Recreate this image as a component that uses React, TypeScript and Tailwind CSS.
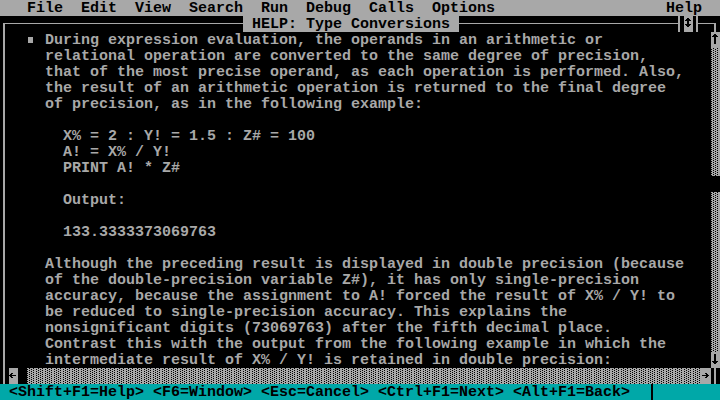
import { useId } from "react"

const GRAY = "#a8a8a8"

// VGA 8x16 glyph rows for the little arrow boxes
const UP = [0, 0, 0x18, 0x3c, 0x7e, 0x18, 0x18, 0x18, 0x18, 0x18, 0x18, 0x18, 0, 0, 0, 0]
const DOWN = [0, 0, 0x18, 0x18, 0x18, 0x18, 0x18, 0x18, 0x18, 0x7e, 0x3c, 0x18, 0, 0, 0, 0]
const LEFT = [0, 0, 0, 0, 0, 0x30, 0x60, 0xfe, 0x60, 0x30, 0, 0, 0, 0, 0, 0]
const RIGHT = [0, 0, 0, 0, 0, 0x18, 0x0c, 0xfe, 0x0c, 0x18, 0, 0, 0, 0, 0, 0]
const UPDOWN = [0, 0, 0x18, 0x3c, 0x7e, 0x18, 0x18, 0x18, 0x7e, 0x3c, 0x18, 0, 0, 0, 0, 0]

function Arrow({ rows }: { rows: number[] }) {
  const px: { x: number; y: number }[] = []
  rows.forEach((r, y) => {
    for (let x = 0; x < 8; x++) if (r & (0x80 >> x)) px.push({ x, y })
  })
  return (
    <svg width={9} height={16} className="block shrink-0" shapeRendering="crispEdges">
      <rect width={9} height={16} fill={GRAY} />
      {px.map((p) => (
        <rect key={`${p.x}-${p.y}`} x={p.x} y={p.y} width={1} height={1} fill="#000" />
      ))}
    </svg>
  )
}

type BoxKind = "v" | "tl" | "tr" | "lt" | "rt"

function Box({ kind }: { kind: BoxKind }) {
  return (
    <svg width={9} height={16} className="block shrink-0" shapeRendering="crispEdges" fill={GRAY}>
      {kind === "v" && <rect x={3} y={0} width={2} height={16} />}
      {kind === "tl" && (
        <>
          <rect x={3} y={7} width={2} height={9} />
          <rect x={3} y={7} width={6} height={1} />
        </>
      )}
      {kind === "tr" && (
        <>
          <rect x={3} y={7} width={2} height={9} />
          <rect x={0} y={7} width={5} height={1} />
        </>
      )}
      {kind === "lt" && (
        <>
          <rect x={3} y={0} width={2} height={16} />
          <rect x={0} y={7} width={4} height={1} />
        </>
      )}
      {kind === "rt" && (
        <>
          <rect x={3} y={0} width={2} height={16} />
          <rect x={4} y={7} width={5} height={1} />
        </>
      )}
    </svg>
  )
}

function HLine({ cols }: { cols: number }) {
  return (
    <div className="h-4 shrink-0" style={{ width: cols * 9 }}>
      <div className="mt-[7px] h-px bg-[#a8a8a8]" />
    </div>
  )
}

// ░ scrollbar texture, black dots on gray
function Shade({ cols, rows }: { cols: number; rows: number }) {
  const id = useId()
  return (
    <svg width={cols * 9} height={rows * 16} className="block shrink-0" shapeRendering="crispEdges">
      <defs>
        <pattern id={id} width={9} height={2} patternUnits="userSpaceOnUse">
          <rect width={9} height={2} fill={GRAY} />
          <rect x={2} y={0} width={1} height={1} fill="#000" />
          <rect x={6} y={0} width={1} height={1} fill="#000" />
          <rect x={0} y={1} width={1} height={1} fill="#000" />
          <rect x={4} y={1} width={1} height={1} fill="#000" />
        </pattern>
      </defs>
      <rect width={cols * 9} height={rows * 16} fill={`url(#${id})`} />
    </svg>
  )
}

const lines = [
  "During expression evaluation, the operands in an arithmetic or",
  "    relational operation are converted to the same degree of precision,",
  "    that of the most precise operand, as each operation is performed. Also,",
  "    the result of an arithmetic operation is returned to the final degree",
  "    of precision, as in the following example:",
  "",
  "      X% = 2 : Y! = 1.5 : Z# = 100",
  "      A! = X% / Y!",
  "      PRINT A! * Z#",
  "",
  "      Output:",
  "",
  "      133.3333373069763",
  "",
  "    Although the preceding result is displayed in double precision (because",
  "    of the double-precision variable Z#), it has only single-precision",
  "    accuracy, because the assignment to A! forced the result of X% / Y! to",
  "    be reduced to single-precision accuracy. This explains the",
  "    nonsignificant digits (73069763) after the fifth decimal place.",
  "    Contrast this with the output from the following example in which the",
  "    intermediate result of X% / Y! is retained in double precision:",
]

export default function App() {
  return (
    <div className="h-[400px] w-[720px] overflow-hidden bg-black whitespace-pre font-['Liberation_Mono',monospace] text-[15px] leading-4 font-bold text-[#a8a8a8]">
      {/* menu bar */}
      <div className="flex h-4 bg-[#a8a8a8] text-black">
        <span className="pt-px">{"   File  Edit  View  Search  Run  Debug  Calls  Options                   Help"}</span>
      </div>

      {/* window top border */}
      <div className="flex h-4">
        <Box kind="tl" />
        <HLine cols={26} />
        <div className="h-4 w-[216px] shrink-0 bg-[#a8a8a8] pt-px text-black">{" HELP: Type Conversions "}</div>
        <HLine cols={24} />
        <Box kind="lt" />
        <Arrow rows={UPDOWN} />
        <Box kind="rt" />
        <HLine cols={1} />
        <Box kind="tr" />
      </div>

      {/* help text */}
      <div className="flex h-[336px]">
        <div className="w-[9px] shrink-0">
          <div className="ml-[3px] h-full w-[2px] bg-[#a8a8a8]" />
        </div>
        <div className="w-[702px] shrink-0">
          {lines.map((line, i) => (
            <div key={i} className="flex h-4 pt-px">
              {i === 0 ? (
                <>
                  <span>{"  "}</span>
                  <svg width={9} height={15} className="block shrink-0" shapeRendering="crispEdges">
                    <rect x={1} y={4} width={5} height={6} fill={GRAY} />
                  </svg>
                  <span>{" " + line}</span>
                </>
              ) : (
                <span>{line}</span>
              )}
            </div>
          ))}
        </div>
        <div className="flex w-[9px] shrink-0 flex-col">
          <Arrow rows={UP} />
          <Shade cols={1} rows={8} />
          <div className="h-4" />
          <Shade cols={1} rows={10} />
          <Arrow rows={DOWN} />
        </div>
      </div>

      {/* horizontal scroll bar */}
      <div className="flex h-4">
        <Box kind="v" />
        <Arrow rows={LEFT} />
        <div className="h-4 w-[9px] shrink-0" />
        <Shade cols={75} rows={1} />
        <Arrow rows={RIGHT} />
        <Box kind="v" />
      </div>

      {/* status line */}
      <div className="flex h-4 bg-[#00a8a8] text-black">
        <span className="w-[648px] shrink-0 pt-px">
          {" <Shift+F1=Help> <F6=Window> <Esc=Cancel> <Ctrl+F1=Next> <Alt+F1=Back>"}
        </span>
        <div className="w-[9px] shrink-0">
          <div className="ml-[3px] h-full w-[2px] bg-black" />
        </div>
      </div>
    </div>
  )
}
